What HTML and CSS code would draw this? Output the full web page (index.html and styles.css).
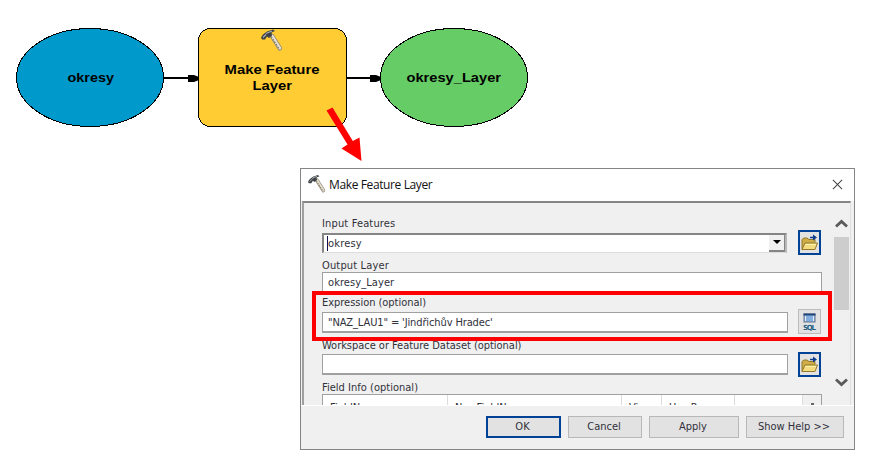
FILE: index.html
```
<!DOCTYPE html>
<html lang="cs">
<head>
<meta charset="utf-8">
<title>Make Feature Layer</title>
<link rel="stylesheet" href="styles.css">
</head>
<body>
<svg class="symbols" aria-hidden="true">
  <symbol id="hammer" viewBox="0 0 22 23">
    <path d="M8.500 6 L12 4.500 L20.500 18 Q21 21 18 21Z" fill="#e9e2d2" stroke="#8b8374" stroke-width=".9"/>
    <path d="M10 7 L18.500 20" stroke="#8f8675" stroke-width="1.500" stroke-dasharray="2 1"/>
    <path d="M0 8 L2 5 L6 2 L12 0 L14 1.500 L10.500 3 L11 6 L8 8.500 L6 7 L4 10 L1 10Z" fill="#3e4246"/>
    <path d="M5 4 L11 1.500 M2 8 L5 5" stroke="#a9b0b5" stroke-width="1.200"/>
  </symbol>
  <symbol id="folder" viewBox="0 0 19 20">
    <path d="M2 17 V7 L4 5.500 H7 L9 7 H15 V10" fill="#cfae48" stroke="#92792b"/>
    <path d="M2 17 L5 10.500 H17.500 L15 17Z" fill="#f3dc80" stroke="#92792b"/>
    <path d="M5.500 12 H16" stroke="#fff2ad"/>
    <path d="M10 5 H15" stroke="#0b3d91" stroke-width="1.500"/>
    <path d="M13 2 L17 5 L13 8Z" fill="#0b3d91"/>
  </symbol>
</svg>
<main class="canvas">
  <svg class="diagram" viewBox="0 0 872 165">
    <g stroke="#000" shape-rendering="crispEdges">
      <ellipse cx="90" cy="77.500" rx="73.500" ry="49" fill="#0099cc"/>
      <rect x="198.500" y="28.500" width="148" height="98" rx="12" fill="#ffcc33"/>
      <ellipse cx="454" cy="77.500" rx="73.500" ry="49" fill="#66cc66"/>
      <path d="M164 78 H190 M347 78 H372" stroke-width="2"/>
    </g>
    <path d="M188 75 L194 75 L199 77 V80 L194 82 L188 82Z M370 75 L376 75 L381 77 V80 L376 82 L370 82Z"/>
    <use href="#hammer" x="261" y="29" width="22" height="24"/>
    <g class="node-text">
      <text x="67.500" y="82" textLength="46.500" lengthAdjust="spacingAndGlyphs">okresy</text>
      <text x="224.500" y="74" textLength="95" lengthAdjust="spacingAndGlyphs">Make Feature</text>
      <text x="252.500" y="90" textLength="39.500" lengthAdjust="spacingAndGlyphs">Layer</text>
      <text x="406.500" y="82" textLength="94.500" lengthAdjust="spacingAndGlyphs">okresy_Layer</text>
    </g>
    <path d="M326.500 110.500 L332.500 107.500 L352.800 141 L359.500 137.500 L361.500 161 L341.500 148.500 L347.500 144.500Z" fill="#f00"/>
  </svg>

  <section class="dialog">
    <header class="titlebar">
      <svg class="title-icon"><use href="#hammer"/></svg>
      <span class="title">Make Feature Layer</span>
      <svg class="close" viewBox="0 0 12 12"><path d="M1 1 L11 11 M11 1 L1 11"/></svg>
    </header>
    <div class="body">
      <form class="form">
        <div class="row row-input">
          <label>Input Features</label>
          <div class="line">
            <div class="field combo"><i class="caret"></i><span>okresy</span><b class="drop"></b></div>
            <div class="tool active"><svg><use href="#folder"/></svg></div>
          </div>
        </div>
        <div class="row row-output">
          <label>Output Layer</label>
          <div class="line"><div class="field wide"><span>okresy_Layer</span></div></div>
        </div>
        <div class="row row-expression">
          <label class="l-expression">Expression (optional)</label>
          <div class="line">
            <div class="field"><span class="query">"NAZ_LAU1" = 'Jindřichův Hradec'</span></div>
            <div class="tool sql">
              <svg viewBox="0 0 21 23"><rect x="5" y="4" width="11" height="8" fill="#83afe0" stroke="#65758a"/><path d="M4.500 4.500H16.500" stroke="#24477b" stroke-width="2"/><path d="M6.500 6V11M14.500 6V11" stroke="#e9eef5"/><text x="4" y="20" textLength="13">SQL</text></svg>
            </div>
          </div>
        </div>
        <div class="row row-workspace">
          <label class="l-workspace">Workspace or Feature Dataset (optional)</label>
          <div class="line">
            <div class="field"></div>
            <div class="tool active"><svg><use href="#folder"/></svg></div>
          </div>
        </div>
        <div class="row row-info">
          <label class="l-info">Field Info (optional)</label>
          <div class="table">
            <span>FieldName</span><span>NewFieldName</span><span>Vis</span><span>Use Ra</span><span></span><span class="up"></span>
          </div>
        </div>
      </form>
      <div class="scrollbar">
        <svg viewBox="0 0 13 9"><path d="M1 7.500 L6.500 2.500 L12 7.500"/></svg>
        <div class="thumb"></div>
        <svg viewBox="0 0 13 9"><path d="M1 1.500 L6.500 6.500 L12 1.500"/></svg>
      </div>
    </div>
    <footer class="footer">
      <div class="button ok">OK</div>
      <div class="button cancel">Cancel</div>
      <div class="button apply">Apply</div>
      <div class="button help">Show Help &gt;&gt;</div>
    </footer>
    <div class="highlight"></div>
  </section>
</main>
</body>
</html>
```
FILE: styles.css
```
* { box-sizing: border-box; }
body { margin: 0; background: #fff; }
.symbols { position: absolute; width: 0; height: 0; }
.canvas { position: relative; width: 872px; height: 473px; overflow: hidden; }
.diagram { position: absolute; left: 0; top: 0; width: 872px; height: 165px; }
.node-text { font: bold 13px "Liberation Sans", Arial, sans-serif; }

.dialog {
  position: absolute; left: 300px; top: 168px; width: 555px; height: 282px;
  display: flex; flex-direction: column;
  border: 1px solid #858585; background: #f0f0f0; color: #30303a;
  font: 11px "DejaVu Sans Condensed", "DejaVu Sans", sans-serif; font-stretch: condensed;
}
.titlebar { display: flex; align-items: center; height: 32px; flex: none; background: #fff; padding: 0 11px 0 7px; }
.title-icon { width: 18px; height: 19px; margin-top: -2px; }
.title { margin: -1px 0 0 3px; font: 12px "Open Sans", "Noto Sans", sans-serif; letter-spacing: -.38px; color: #111; }
.close { width: 11px; height: 11px; margin: -2px 0 0 auto; overflow: visible; }
.close path { fill: none; stroke: #444; stroke-width: 1.1; }

.body { display: flex; height: 204px; flex: none; margin: 0 3px 0 1px; border-top: 2px solid #858585; border-left: 2px solid #a0a0a0; border-right: 1px solid #dfdfdf; overflow: hidden; }
.form { width: 529px; padding-left: 18px; flex: none; }
.row { display: flex; flex-direction: column; }
.row label { height: 14px; line-height: 14px; letter-spacing: .15px; white-space: nowrap; }
.row-input { height: 49px; padding-top: 14px; }
.row-input label { margin-bottom: 1px; }
.row-output { height: 41px; padding-top: 7px; }
.row-output label { margin-bottom: -1px; }
.row-expression { height: 40px; padding-top: 3px; }
.row-expression label { margin-bottom: 2px; }
.row-workspace { height: 42px; padding-top: 6px; }
.row-workspace label { margin-bottom: 1px; }
.row .l-expression, .row .l-workspace { letter-spacing: -.03px; }
.row-info { padding-top: 6px; }
.row-info label { margin-bottom: -1px; }
.row .l-info { letter-spacing: .02px; }
.line { display: flex; align-items: center; height: 21px; gap: 10px; }
.field { display: flex; align-items: center; width: 466px; height: 21px; padding-left: 5px; border: 1px solid #a0a0a0; border-width: 1px 1px 2px; background: #fff; white-space: nowrap; flex: none; }
.wide { width: 500px; letter-spacing: .08px; }
.query { letter-spacing: -.12px; }
.combo { width: 465px; height: 20px; padding-left: 3px; border: 2px solid #858585; border-bottom: 1px solid #ddd; border-right-color: #b8b8b8; margin-right: 1px; letter-spacing: .2px; }
.caret { width: 1px; height: 15px; background: #111155; }
.drop { width: 16px; height: 17px; margin-left: auto; display: flex; align-items: center; justify-content: center; background: #f0f0f0; border-right: 1px solid #858585; border-bottom: 2px solid #858585; }
.drop::after { content: ""; border: 4px solid transparent; border-top-color: #000; border-bottom: 0; }
.tool { width: 23px; height: 25px; flex: none; border: 1px solid #bcbcbc; background: #e2e2e2; }
.tool svg { display: block; width: 100%; height: 100%; }
.active { border: 2px solid #004396; }
.sql { position: relative; top: -1px; }
.sql text { font: bold 7px "DejaVu Sans", sans-serif; fill: #245f85; }

.table { display: grid; grid-template-columns: 125px 174px 40px 73px 68px 18px; width: 500px; height: 28px; border: 1px solid #a0a0a0; background: #fff; line-height: 26px; flex: none; }
.table span { padding-left: 7px; border-right: 1px solid #ddd; }
.table .up { display: flex; justify-content: center; padding: 8px 0 0; background: #f0f0f0; border: 0; }
.up::before { content: ""; width: 3px; height: 2px; background: #666; }
.scrollbar { width: 17px; height: 202px; display: flex; flex-direction: column; align-items: center; padding-top: 16px; }
.scrollbar svg { width: 13px; height: 9px; flex: none; }
.scrollbar path { fill: none; stroke: #5a5a5a; stroke-width: 2.8; }
.thumb { width: 15px; height: 73px; margin: 9px 0 68px; background: #cdcdcd; flex: none; }

.footer { display: flex; height: 44px; padding: 10px 10px 0 185px; border-top: 1px solid #fff; background: #f0f0f0; flex: none; }
.button { height: 22px; width: 75px; border: 1px solid #b8b8b8; background: #e2e2e2; line-height: 20px; text-align: center; white-space: nowrap; flex: none; }
.ok { border: 2px solid #004396; line-height: 18px; padding-right: 2px; }
.cancel { margin-left: 7px; width: 74px; padding-right: 2px; }
.apply { width: 90px; margin-left: 7px; padding-right: 2px; }
.help { width: 98px; margin-left: 7px; padding-right: 2px; }
.highlight { position: absolute; left: 11px; top: 122px; width: 520px; height: 50px; border: 4px solid #f00; }
```
